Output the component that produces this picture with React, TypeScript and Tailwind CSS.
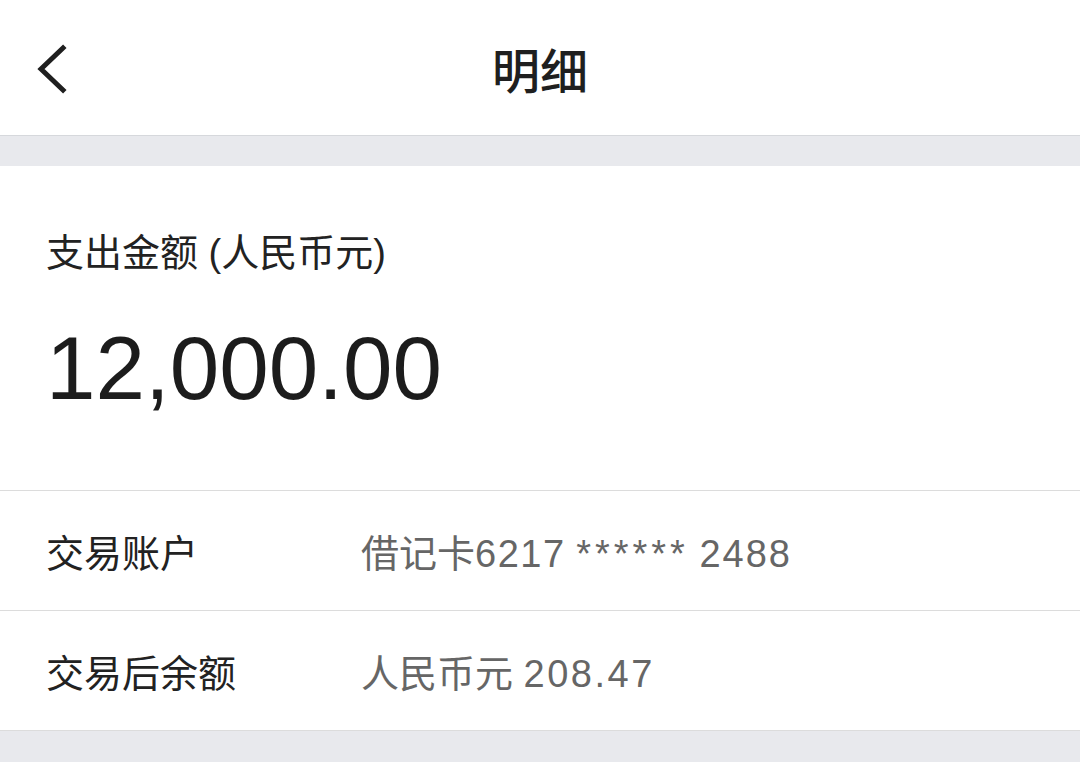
const FONT = { fontFamily: '"Liberation Sans", "Noto Sans CJK SC", sans-serif' };

export default function App() {
  return (
    <div className="h-[762px] w-[1080px] overflow-hidden bg-[#e8e9ed]" style={FONT}>
      {/* Header */}
      <header className="relative flex h-[136px] items-center justify-center border-b border-[#d6d8dc] bg-white">
        <button className="absolute left-[34px] top-[44px] text-[#1f1f1f]">
          <svg width="34" height="50" viewBox="0 0 34 50" fill="none">
            <polyline
              points="29,4 7,25 29,46"
              stroke="currentColor"
              strokeWidth="5"
              strokeLinecap="square"
              strokeLinejoin="miter"
            />
          </svg>
        </button>
        <h1
          className="text-[48px] font-medium text-[#1f1f1f]"
          style={{ fontFamily: '"Noto Sans CJK SC", sans-serif' }}
        >
          明细
        </h1>
      </header>

      <div className="h-[30px]" />

      {/* Amount card */}
      <section className="bg-white">
        <div className="h-[325px] border-b border-[#dcdcdc] px-[46px] pt-[62px]">
          <p className="text-[38px] leading-[50px] text-[#222]">支出金额 (人民币元)</p>
          <p className="mt-[40px] text-[89px] leading-[100px] text-[#1c1c1c]">12,000.00</p>
        </div>

        <div className="flex h-[120px] items-center border-b border-[#dcdcdc] px-[46px] pt-[8px]">
          <span className="w-[315px] text-[38px] text-[#222]">交易账户</span>
          <span className="text-[38px] text-[#666]">
            借记卡<span className="tracking-[1.5px]">6217</span>{" "}
            <span className="tracking-[4px]">******</span>{" "}
            <span className="tracking-[2px]">2488</span>
          </span>
        </div>

        <div className="flex h-[120px] items-center border-b border-[#dcdcdc] px-[46px] pt-[8px]">
          <span className="w-[315px] text-[38px] text-[#222]">交易后余额</span>
          <span className="text-[38px] text-[#666]">
            人民币元 <span className="tracking-[2.5px]">208.47</span>
          </span>
        </div>
      </section>
    </div>
  );
}
